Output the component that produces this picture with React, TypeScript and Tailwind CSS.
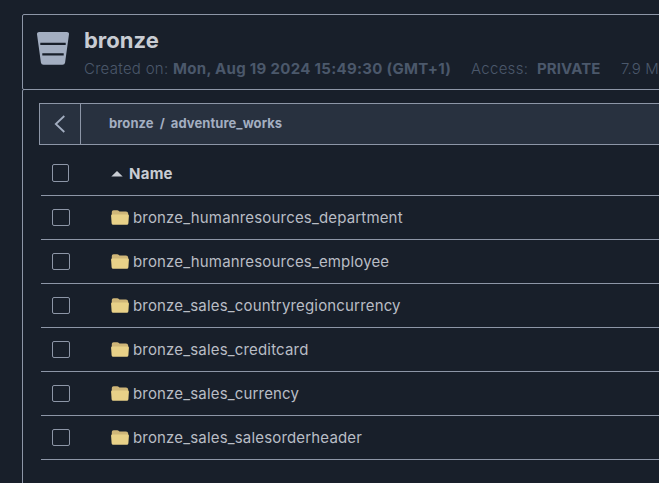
const folders = [
  "bronze_humanresources_department",
  "bronze_humanresources_employee",
  "bronze_sales_countryregioncurrency",
  "bronze_sales_creditcard",
  "bronze_sales_currency",
  "bronze_sales_salesorderheader",
];

function BucketIcon() {
  return (
    <svg className="block shrink-0" width="32" height="33" viewBox="0 0 32 33">
      <path d="M2 0h28q2.200 0 2 2.200l-3.900 28.200q-.3 2.300-2.600 2.300h-19q-2.300 0-2.600-2.300L0 2.200Q-.2 0 2 0z" fill="#a3aec1" />
      <path d="M3.300 11.800h25.400M5.300 22.300h21.400" stroke="#181f2a" strokeWidth="2.200" />
    </svg>
  );
}

function FolderIcon() {
  return (
    <svg className="block shrink-0" width="18" height="15" viewBox="0 0 18 15">
      <path d="M.8 6V2Q.8.200 2.600.200h3.600q1 0 1.700.8.500.5 1.300.5h5.800Q17 1.500 17.200 3.500V7H.8z" fill="#cfb678" />
      <path d="M1.200 4.500h15.600q1.200 0 1.100 1.200l-.5 7.500q-.1 1.600-1.600 1.600H2.200q-1.500 0-1.600-1.600L.1 5.700Q0 4.500 1.200 4.500z" fill="#e8d188" />
    </svg>
  );
}

function Checkbox() {
  return <span className="block h-[17px] w-[18px] shrink-0 rounded-[2px] border border-[#8d96a7]" />;
}

export default function App() {
  return (
    <div className="h-[483px] w-[659px] overflow-hidden bg-[#181f2a] pt-[14px] pl-[22px] font-['Inter','Liberation_Sans',sans-serif]">
      <header className="flex h-[76px] w-[660px] rounded-l-[2px] border border-[#8d96a7] pt-[17px] pl-[14px]">
        <BucketIcon />
        <div className="ml-[15px] -mt-[7px] whitespace-nowrap">
          <h1 className="h-[32px] text-[22px] leading-[30px] font-bold text-[#c8ccd3]">bronze</h1>
          <div className="flex h-[24px] items-center text-[15px] leading-6 font-light tracking-[0.28px] text-[#4b586b]">
            <span className="w-[387px]">
              Created on: <strong className="font-bold tracking-[0.3px]">Mon, Aug 19 2024 15:49:30 (GMT+1)</strong>
            </span>
            <span className="w-[66px]">Access:</span>
            <strong className="w-[84px] font-bold tracking-[0.1px]">PRIVATE</strong>
            <span className="tracking-[0.1px]">7.9 MiB</span>
          </div>
        </div>
      </header>
      <main className="-mt-px h-[400px] w-[660px] rounded-tl-[2px] border border-[#8d96a7] pt-[13px] pl-4">
        <nav className="flex h-[42px] border border-[#8d96a7] bg-[#28313f]">
          <button className="flex w-[41px] items-center justify-center border-r border-[#8d96a7]" aria-label="Back">
            <svg width="12" height="18" viewBox="0 0 12 18" fill="none" stroke="#a3aec1" strokeWidth="1.800">
              <path d="M10.300 1 1.800 9l8.500 8" />
            </svg>
          </button>
          <div className="flex items-center gap-[6px] pl-[28px] text-[13px] font-bold tracking-[0.08px] text-[#a3aec1]">
            <span>bronze</span>
            <span>/</span>
            <span>adventure_works</span>
          </div>
        </nav>
        <div className="ml-[2px]">
          <div className="flex h-[51px] items-center border-b border-[#8d96a7] pl-[11px]">
            <div className="mt-[7px] flex items-center">
              <span className="mb-[2px] block h-[18px] w-[17px] shrink-0 rounded-[2px] border border-[#8d96a7]" />
              <svg className="ml-[42px] mt-px block" width="12" height="6" viewBox="0 0 12 6">
                <path d="M.3 5.500 6 0l5.700 5.500z" fill="#c8ccd3" />
              </svg>
              <span className="ml-[6px] text-[15px] leading-5 font-bold tracking-[0.25px] text-[#c8ccd3]">Name</span>
            </div>
          </div>
          {folders.map((name) => (
            <div key={name} className="flex h-11 items-center border-b border-[#8d96a7] pl-[11px]">
              <Checkbox />
              <span className="ml-[41px]">
                <FolderIcon />
              </span>
              <span className="ml-[4px] text-[15px] leading-5 tracking-[0.17px] text-[#b9bdc5]">{name}</span>
            </div>
          ))}
        </div>
      </main>
    </div>
  );
}
